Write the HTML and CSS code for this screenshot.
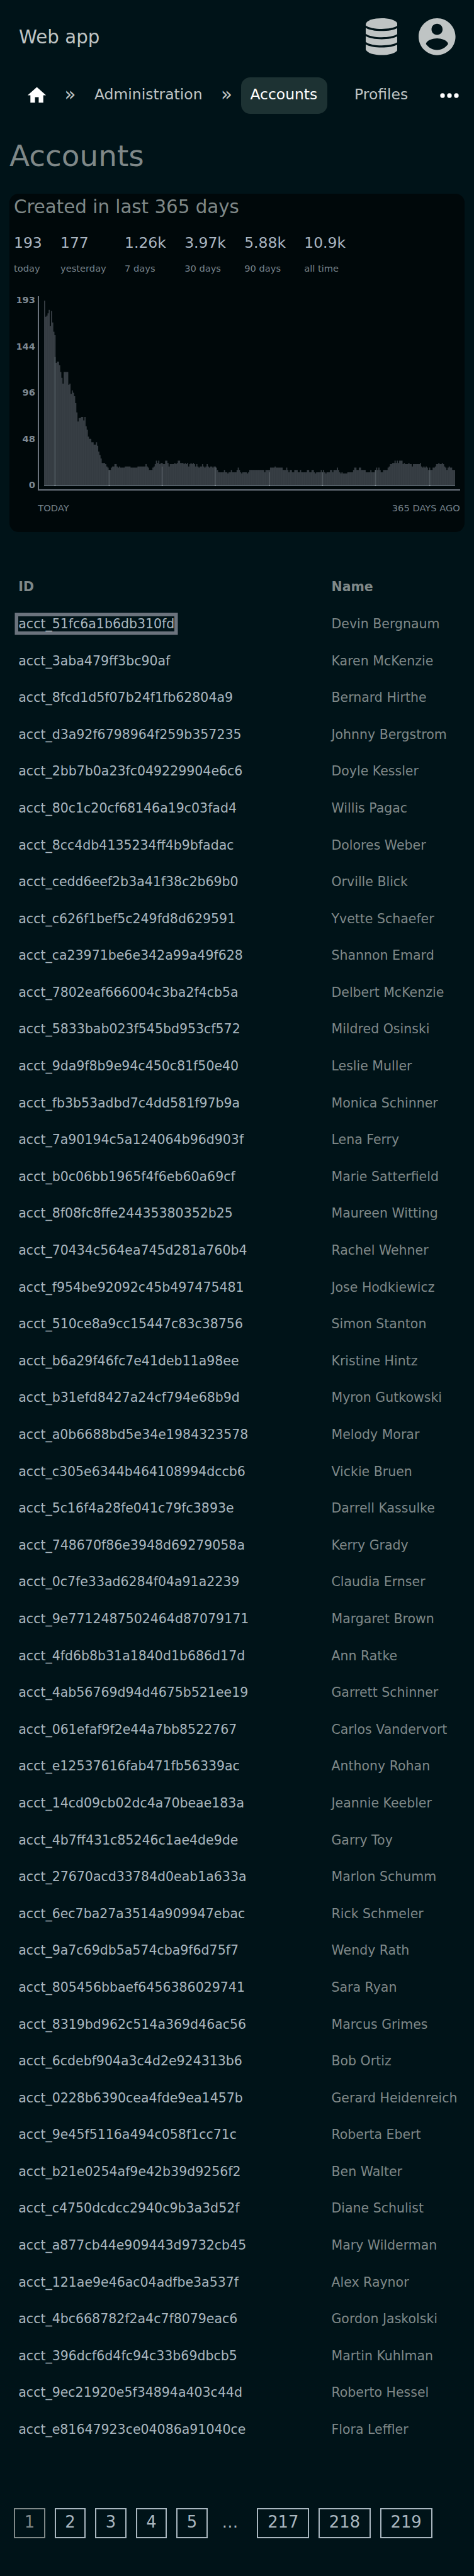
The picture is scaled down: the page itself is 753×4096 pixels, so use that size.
FILE: index.html
```
<!DOCTYPE html>
<html lang="en">
<head>
<meta charset="utf-8">
<title>Accounts</title>
<link rel="stylesheet" href="styles.css">
</head>
<body>
<header class="topbar">
  <a class="brand">Web app</a>
  <div class="topbar-icons">
    <svg class="icon-storage" viewBox="0 0 97 112"><path d="M0 18C4 -6 93 -6 97 18V22C79 36 18 36 0 22Z"/><path d="M0 29C18 42 79 42 97 29V47C79 61 18 61 0 47Z"/><path d="M0 54C18 67 79 67 97 54V72C79 86 18 86 0 72Z"/><path d="M0 79C18 92 79 92 97 79V95C88 117.500 9 117.500 0 95Z"/></svg>
    <svg class="icon-account" viewBox="2 2 20 20"><path d="M12 2C6.480 2 2 6.480 2 12s4.480 10 10 10 10-4.480 10-10S17.520 2 12 2zm0 3c1.660 0 3 1.340 3 3s-1.340 3-3 3-3-1.340-3-3 1.340-3 3-3zm0 14.200c-2.500 0-4.710-1.280-6-3.220.030-1.990 4-3.080 6-3.080 1.990 0 5.970 1.090 6 3.080-1.290 1.940-3.500 3.220-6 3.220z"/></svg>
  </div>
</header>
<nav class="crumbs">
  <svg class="icon-home" viewBox="0 0 24 24"><path d="M10 20v-6h4v6h5v-8h3L12 3 2 12h3v8z"/></svg>
  <span class="sep">»</span>
  <a class="crumb crumb-admin">Administration</a>
  <span class="sep">»</span>
  <a class="crumb crumb-active">Accounts</a>
  <a class="crumb crumb-profiles">Profiles</a>
  <svg class="icon-more" viewBox="0 0 24 24"><circle cx="6" cy="12" r="2"/><circle cx="12" cy="12" r="2"/><circle cx="18" cy="12" r="2"/></svg>
</nav>
<main>
<h1 class="page-title">Accounts</h1>
<section class="card">
  <h2 class="card-title">Created in last 365 days</h2>
  <div class="stats">
    <div class="stat"><b class="stat-value">193</b><span class="stat-label">today</span></div>
    <div class="stat"><b class="stat-value">177</b><span class="stat-label">yesterday</span></div>
    <div class="stat"><b class="stat-value">1.26k</b><span class="stat-label">7 days</span></div>
    <div class="stat"><b class="stat-value">3.97k</b><span class="stat-label">30 days</span></div>
    <div class="stat"><b class="stat-value">5.88k</b><span class="stat-label">90 days</span></div>
    <div class="stat"><b class="stat-value">10.9k</b><span class="stat-label">all time</span></div>
  </div>
  <div class="chart">
    <div class="y-axis"><span>193</span><span>144</span><span>96</span><span>48</span><span>0</span></div>
    <div class="plot">
      <svg class="bars" viewBox="0 0 357 161" preserveAspectRatio="none">
        <defs>
          <pattern id="lines" width="2" height="161" patternUnits="userSpaceOnUse"><rect class="bar-fill" width="2" height="161"/><rect class="bar-line" x="0.850" width="0.300" height="161"/></pattern>
        </defs>
        <g transform="matrix(1 0 0 -1 0 161)">
          <path fill="url(#lines)" d="M0 0V161h1V147h1V148h1V150h1V153h1V139h1V152h1V142h1V134h1V131h1V107h1V108h2V105h1V99h1V94h1V89h1V99h4V88h1V89h1V80h1V83h1V81h1V78h1V72h1V64h1V56h1V59h2V60h2V57h1V60h1V52h1V49h1V43h1V41h2V38h2V36h2V38h1V35h1V30h1V27h1V24h1V20h3V19h1V17h1V16h1V14h2V16h1V17h2V19h2V17h1V16h1V17h1V16h4V17h5V16h6V17h7V19h1V17h1V16h1V14h3V16h1V17h1V19h1V22h1V20h1V22h1V19h1V20h2V19h2V22h2V20h1V17h1V19h4V20h1V19h1V20h1V22h2V20h3V19h1V20h1V19h1V20h1V17h1V19h1V20h1V19h1V20h1V19h1V17h1V19h1V17h1V16h1V17h2V19h1V17h1V16h1V17h1V19h1V17h1V16h1V17h2V16h1V17h2V16h1V14h1V12h5V14h1V12h2V11h1V12h2V14h1V12h4V14h1V16h1V14h1V12h1V11h1V12h4V11h1V12h1V14h13V12h1V14h4V16h4V17h1V16h6V14h3V16h1V14h1V12h1V14h2V12h2V14h3V12h2V14h1V12h5V14h2V12h2V14h2V12h1V11h1V12h4V14h1V12h1V14h1V12h1V11h1V12h3V14h2V12h1V14h3V16h1V14h1V12h1V11h1V12h1V11h4V12h5V14h1V16h2V14h2V16h2V14h4V12h4V14h1V12h3V14h1V16h1V14h1V16h1V14h1V12h2V14h4V16h1V17h1V19h2V20h2V22h1V20h1V22h1V20h1V22h3V19h1V20h1V19h3V20h1V19h2V17h1V19h6V20h1V17h1V16h1V17h1V16h1V17h1V16h1V14h1V16h1V14h2V16h2V17h1V19h2V20h1V19h2V20h1V19h1V17h1V16h1V14h1V16h1V17h1V16h2V14h3V0z"/>
          <path class="bar-mark" d="M9 0h1v112h-1zM56 0h1v14h-1zM102 0h1v17h-1zM148 0h1v16h-1zM195 0h1v12h-1zM241 0h1v12h-1zM287 0h1v14h-1zM334 0h1v14h-1z"/>
          <path class="bar-base" d="M0 0h357v1H0z"/>
          <path class="mark-base" d="M9 0h1v1h-1zM56 0h1v1h-1zM102 0h1v1h-1zM148 0h1v1h-1zM195 0h1v1h-1zM241 0h1v1h-1zM287 0h1v1h-1zM334 0h1v1h-1z"/>
        </g>
      </svg>
    </div>
  </div>
  <div class="x-axis"><span>TODAY</span><span>365 DAYS AGO</span></div>
</section>
<table class="accounts">
<thead><tr><th class="col-id">ID</th><th>Name</th></tr></thead>
<tbody>
<tr><td><a class="focused">acct_51fc6a1b6db310fd</a></td><td>Devin Bergnaum</td></tr>
<tr><td><a>acct_3aba479ff3bc90af</a></td><td>Karen McKenzie</td></tr>
<tr><td><a>acct_8fcd1d5f07b24f1fb62804a9</a></td><td>Bernard Hirthe</td></tr>
<tr><td><a>acct_d3a92f6798964f259b357235</a></td><td>Johnny Bergstrom</td></tr>
<tr><td><a>acct_2bb7b0a23fc049229904e6c6</a></td><td>Doyle Kessler</td></tr>
<tr><td><a>acct_80c1c20cf68146a19c03fad4</a></td><td>Willis Pagac</td></tr>
<tr><td><a>acct_8cc4db4135234ff4b9bfadac</a></td><td>Dolores Weber</td></tr>
<tr><td><a>acct_cedd6eef2b3a41f38c2b69b0</a></td><td>Orville Blick</td></tr>
<tr><td><a>acct_c626f1bef5c249fd8d629591</a></td><td>Yvette Schaefer</td></tr>
<tr><td><a>acct_ca23971be6e342a99a49f628</a></td><td>Shannon Emard</td></tr>
<tr><td><a>acct_7802eaf666004c3ba2f4cb5a</a></td><td>Delbert McKenzie</td></tr>
<tr><td><a>acct_5833bab023f545bd953cf572</a></td><td>Mildred Osinski</td></tr>
<tr><td><a>acct_9da9f8b9e94c450c81f50e40</a></td><td>Leslie Muller</td></tr>
<tr><td><a>acct_fb3b53adbd7c4dd581f97b9a</a></td><td>Monica Schinner</td></tr>
<tr><td><a>acct_7a90194c5a124064b96d903f</a></td><td>Lena Ferry</td></tr>
<tr><td><a>acct_b0c06bb1965f4f6eb60a69cf</a></td><td>Marie Satterfield</td></tr>
<tr><td><a>acct_8f08fc8ffe24435380352b25</a></td><td>Maureen Witting</td></tr>
<tr><td><a>acct_70434c564ea745d281a760b4</a></td><td>Rachel Wehner</td></tr>
<tr><td><a>acct_f954be92092c45b497475481</a></td><td>Jose Hodkiewicz</td></tr>
<tr><td><a>acct_510ce8a9cc15447c83c38756</a></td><td>Simon Stanton</td></tr>
<tr><td><a>acct_b6a29f46fc7e41deb11a98ee</a></td><td>Kristine Hintz</td></tr>
<tr><td><a>acct_b31efd8427a24cf794e68b9d</a></td><td>Myron Gutkowski</td></tr>
<tr><td><a>acct_a0b6688bd5e34e1984323578</a></td><td>Melody Morar</td></tr>
<tr><td><a>acct_c305e6344b464108994dccb6</a></td><td>Vickie Bruen</td></tr>
<tr><td><a>acct_5c16f4a28fe041c79fc3893e</a></td><td>Darrell Kassulke</td></tr>
<tr><td><a>acct_748670f86e3948d69279058a</a></td><td>Kerry Grady</td></tr>
<tr><td><a>acct_0c7fe33ad6284f04a91a2239</a></td><td>Claudia Ernser</td></tr>
<tr><td><a>acct_9e7712487502464d87079171</a></td><td>Margaret Brown</td></tr>
<tr><td><a>acct_4fd6b8b31a1840d1b686d17d</a></td><td>Ann Ratke</td></tr>
<tr><td><a>acct_4ab56769d94d4675b521ee19</a></td><td>Garrett Schinner</td></tr>
<tr><td><a>acct_061efaf9f2e44a7bb8522767</a></td><td>Carlos Vandervort</td></tr>
<tr><td><a>acct_e12537616fab471fb56339ac</a></td><td>Anthony Rohan</td></tr>
<tr><td><a>acct_14cd09cb02dc4a70beae183a</a></td><td>Jeannie Keebler</td></tr>
<tr><td><a>acct_4b7ff431c85246c1ae4de9de</a></td><td>Garry Toy</td></tr>
<tr><td><a>acct_27670acd33784d0eab1a633a</a></td><td>Marlon Schumm</td></tr>
<tr><td><a>acct_6ec7ba27a3514a909947ebac</a></td><td>Rick Schmeler</td></tr>
<tr><td><a>acct_9a7c69db5a574cba9f6d75f7</a></td><td>Wendy Rath</td></tr>
<tr><td><a>acct_805456bbaef6456386029741</a></td><td>Sara Ryan</td></tr>
<tr><td><a>acct_8319bd962c514a369d46ac56</a></td><td>Marcus Grimes</td></tr>
<tr><td><a>acct_6cdebf904a3c4d2e924313b6</a></td><td>Bob Ortiz</td></tr>
<tr><td><a>acct_0228b6390cea4fde9ea1457b</a></td><td>Gerard Heidenreich</td></tr>
<tr><td><a>acct_9e45f5116a494c058f1cc71c</a></td><td>Roberta Ebert</td></tr>
<tr><td><a>acct_b21e0254af9e42b39d9256f2</a></td><td>Ben Walter</td></tr>
<tr><td><a>acct_c4750dcdcc2940c9b3a3d52f</a></td><td>Diane Schulist</td></tr>
<tr><td><a>acct_a877cb44e909443d9732cb45</a></td><td>Mary Wilderman</td></tr>
<tr><td><a>acct_121ae9e46ac04adfbe3a537f</a></td><td>Alex Raynor</td></tr>
<tr><td><a>acct_4bc668782f2a4c7f8079eac6</a></td><td>Gordon Jaskolski</td></tr>
<tr><td><a>acct_396dcf6d4fc94c33b69dbcb5</a></td><td>Martin Kuhlman</td></tr>
<tr><td><a>acct_9ec21920e5f34894a403c44d</a></td><td>Roberto Hessel</td></tr>
<tr><td><a>acct_e81647923ce04086a91040ce</a></td><td>Flora Leffler</td></tr>
</tbody>
</table>
<div class="pages">
  <span class="page page-current">1</span>
  <a class="page">2</a>
  <a class="page">3</a>
  <a class="page">4</a>
  <a class="page">5</a>
  <span class="page-gap">…</span>
  <a class="page page-wide">217</a>
  <a class="page page-wide">218</a>
  <a class="page page-wide">219</a>
</div>
</main>
</body>
</html>
```
FILE: styles.css
```
* { box-sizing: border-box; }
html { background: #001318; }
body {
  margin: 0;
  width: 753px;
  height: 4096px;
  overflow: hidden;
  background: #001318;
  color: #7f8888;
  font-family: "DejaVu Sans", sans-serif;
  font-size: 20.510px;
}
svg { display: block; flex: none; }

.topbar {
  display: flex;
  justify-content: space-between;
  align-items: center;
  height: 117px;
  padding: 0 29.500px 0 30px;
}
.brand { font-size: 29.300px; line-height: 40px; color: #bfc4c4; }
.topbar-icons { display: flex; gap: 33.500px; fill: #bfc4c4; }
.icon-storage { width: 50.800px; height: 58.700px; }
.icon-account { width: 58.600px; height: 58.700px; }

.crumbs {
  display: grid;
  grid-template-columns: 35.100px 70.800px 190.200px 45.600px 137.300px 172.100px 44px;
  align-items: center;
  height: 58.900px;
  margin-top: 5.600px;
  padding-left: 41.100px;
  font-size: 23.440px;
  color: #bfc4c4;
}
.icon-home { width: 35.100px; height: 35.100px; fill: #fff; }
.icon-more { width: 44px; height: 44px; fill: #fff; }
.sep { text-align: center; font-size: 29.300px; line-height: 30px; padding-bottom: 4px; }
.crumb { line-height: 30px; padding-bottom: 5px; }
.crumb-admin { padding-left: 3px; }
.crumb-active {
  height: 58.900px;
  padding: 12px 0 0 14.650px;
  border-radius: 14.650px;
  background: #1d3233;
  color: #fff;
}
.crumb-profiles { padding-left: 43px; }

.page-title {
  margin: 32px 0 0 15px;
  height: 94.200px;
  font-size: 46.900px;
  line-height: 69px;
  font-weight: 400;
}

.card {
  width: 723.500px;
  height: 538.200px;
  margin-left: 14.650px;
  padding: 0 7.350px;
  border-radius: 14.650px;
  background: #00080a;
}
.card-title {
  margin: 0;
  height: 42.200px;
  font-size: 29.300px;
  line-height: 43px;
  font-weight: 400;
}
.stats { display: flex; gap: 29.300px; margin-top: 16px; }
.stat { display: flex; flex-direction: column; gap: 11.500px; }
.stat-value { font-size: 23.440px; line-height: 40px; font-weight: 400; color: #aab5c1; }
.stat-label { font-size: 14.650px; line-height: 20px; color: #76828a; }
.chart { display: flex; gap: 4.300px; height: 309.500px; margin-top: 33.300px; }
.y-axis {
  display: flex;
  flex-direction: column;
  justify-content: space-between;
  width: 34px;
  height: 308.400px;
  margin-top: -0.700px;
  font-size: 14.650px;
  line-height: 14px;
  font-weight: 700;
  text-align: right;
  color: #7e8992;
}
.plot {
  width: 670.400px;
  padding: 7.200px 0 0 7.400px;
  border-left: 2px solid #6b737d;
  border-bottom: 2px solid #6b737d;
}
.bars { width: 653.800px; height: 294.900px; }
.bar-fill { fill: #373e44; }
.bar-line { fill: #2c3339; }
.bar-mark { fill: #4e565c; }
.bar-base { fill: #545f67; }
.mark-base { fill: #838e97; }
.x-axis {
  display: flex;
  justify-content: space-between;
  margin: 18px 0 0 38.300px;
  font-size: 14.650px;
  line-height: 20px;
  color: #76828a;
}

.accounts { width: 753px; margin-top: 57.700px; border-collapse: collapse; table-layout: fixed; }
.accounts tr { height: 58.607px; }
.accounts th, .accounts td {
  padding: 1px 0 0 0.700px;
  text-align: left;
  line-height: 24px;
  white-space: nowrap;
}
.col-id { width: 525.800px; }
.accounts th:first-child, .accounts td:first-child { padding-left: 29.300px; }
.accounts a { color: #a9b6bf; }
.accounts .focused { box-shadow: 0 0 0 5.500px #6b737d; }

.pages {
  display: flex;
  gap: 14.800px;
  margin: 96.200px 0 0 22.100px;
  font-size: 25.790px;
  color: #a9b6bf;
}
.page {
  width: 49.700px;
  height: 47.800px;
  border: 2px solid #a9b6bf;
  line-height: 41px;
  text-align: center;
}
.page-current { color: #7f8888; border-color: #7f8888; }
.page-wide { width: 82.900px; }
.page-gap { width: 49px; padding-left: 8px; line-height: 45px; }
```
